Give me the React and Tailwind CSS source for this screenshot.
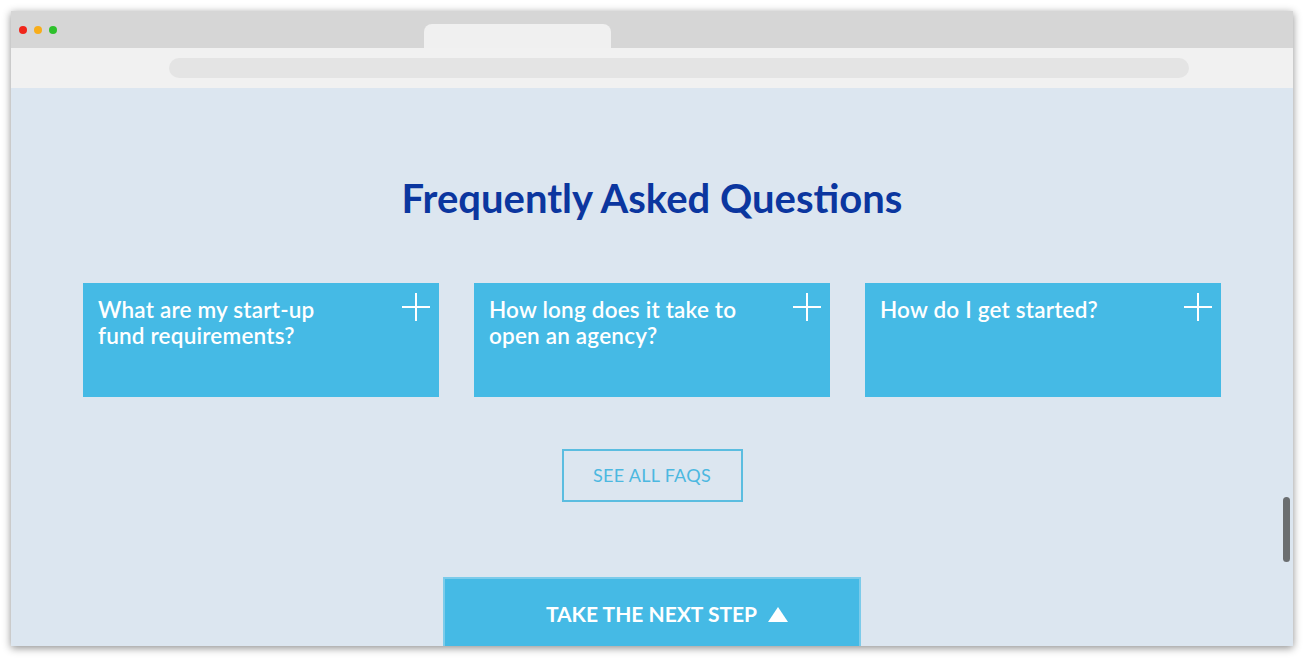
import React from 'react';

const FAQS = [
  ['What are my start-up', 'fund requirements?'],
  ['How long does it take to', 'open an agency?'],
  ['How do I get started?'],
];

function PlusIcon() {
  return (
    <svg width="30" height="30" viewBox="0 0 30 30" className="shrink-0">
      <path d="M15 1v28M1 15h28" stroke="#fff" strokeWidth="2" fill="none" />
    </svg>
  );
}

export default function App() {
  return (
    <div className="w-[1312px] h-[666px] bg-white overflow-hidden pt-[11px] pl-[11px]" style={{ fontFamily: 'Lato, "Open Sans", sans-serif' }}>
      {/* Browser window */}
      <div className="w-[1282px] h-[635px] flex flex-col shadow-[0_2px_8px_rgba(0,0,0,0.45)]">
        {/* Title bar */}
        <div className="h-[37px] shrink-0 bg-[#d6d6d6] flex items-end relative">
          <div className="absolute left-[8px] top-[15px] flex gap-[7px]">
            <span className="w-[8px] h-[8px] rounded-full bg-[#f0261b]" />
            <span className="w-[8px] h-[8px] rounded-full bg-[#f8ad1a]" />
            <span className="w-[8px] h-[8px] rounded-full bg-[#2ec12c]" />
          </div>
          <div className="ml-[413px] w-[187px] h-[24px] bg-[#f0f0f0] rounded-t-[8px]" />
        </div>
        {/* Address bar */}
        <div className="h-[40px] shrink-0 bg-[#f1f1f1] flex items-center pl-[158px]">
          <div className="w-[1020px] h-[20px] rounded-full bg-[#e4e4e4]" />
        </div>
        {/* Page */}
        <div className="flex-1 min-h-0 bg-[#dce6f0] relative overflow-hidden flex flex-col items-center">
          <h2 className="shrink-0 mt-[86px] text-[40px] leading-[48px] font-bold text-[#0b369f]">
            Frequently Asked Questions
          </h2>
          <div className="shrink-0 mt-[61px] flex gap-[35px]">
            {FAQS.map((lines) => (
              <div key={lines[0]} className="w-[356px] h-[114px] bg-[#45bae5] flex justify-between pl-[15px] pr-[8px] pt-[14px]">
                <p className="text-[22.5px] leading-[26px] font-semibold text-white whitespace-nowrap tracking-[0.2px]">
                  {lines.map((l, i) => (
                    <span key={i} className="block">{l}</span>
                  ))}
                </p>
                <div className="mt-[-5px]">
                  <PlusIcon />
                </div>
              </div>
            ))}
          </div>
          <button className="shrink-0 mt-[52px] w-[181px] h-[53px] border-2 border-[#5bbde0] text-[#4cb8e0] text-[18px] tracking-[0.3px] uppercase">
            See all FAQs
          </button>
          <div className="shrink-0 mt-[75px] w-[418px] h-[80px] bg-[#45bae5] border-t-2 border-x-2 border-[#7ccbea] flex justify-center pt-[22px] pl-[30px]">
            <span className="text-white text-[21px] font-bold uppercase flex items-center gap-[11px] h-[26px]">
              Take the next step
              <svg width="20" height="15" viewBox="0 0 20 15">
                <path d="M10 0L20 15H0z" fill="#fff" />
              </svg>
            </span>
          </div>
          {/* Scrollbar */}
          <div className="absolute right-[3px] top-[409px] w-[7px] h-[65px] rounded-full bg-[#6b6e70]" />
        </div>
      </div>
    </div>
  );
}
